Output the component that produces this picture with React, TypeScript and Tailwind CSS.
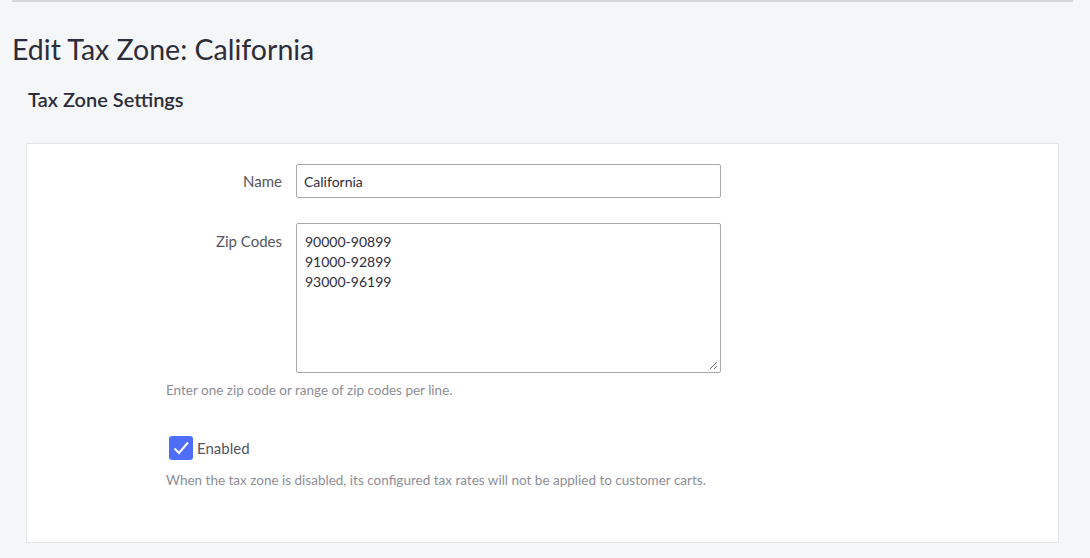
import React from "react";

export default function App() {
  const font = { fontFamily: "Lato, 'Open Sans', sans-serif" };
  return (
    <div className="w-[1090px] h-[558px] bg-[#f5f6f8] overflow-hidden" style={font}>
      <div className="pl-[12px] pr-[17px]">
        <div className="h-[2px] bg-[#d6d7da]" />
        <h1 className="mt-[31px] text-[28.5px] leading-[32px] text-[#2c2d3a] font-normal">
          Edit Tax Zone: California
        </h1>
        <h2 className="mt-[22px] ml-[16px] text-[20px] leading-[24px] font-semibold text-[#2c2d3a]">
          Tax Zone Settings
        </h2>
      </div>
      <div className="ml-[26px] mt-[32px] w-[1033px] h-[400px] bg-white border border-[#e3e4e8] pt-[20px]">
        <div className="flex items-center">
          <label className="w-[255px] text-right text-[15px] text-[#55565f]">Name</label>
          <div className="ml-[14px] w-[425px] h-[34px] border border-[#a9a9ad] rounded-[2px] flex items-center px-[7px] text-[14px] text-[#2c2d3a]">
            California
          </div>
        </div>
        <div className="flex mt-[25px]">
          <label className="w-[255px] text-right text-[15px] text-[#55565f] pt-[7px]">Zip Codes</label>
          <div className="ml-[14px] w-[425px] h-[150px] border border-[#a9a9ad] rounded-[2px] px-[8px] pt-[8px] text-[14px] leading-[20px] text-[#2c2d3a] relative">
            <div>90000-90899</div>
            <div>91000-92899</div>
            <div>93000-96199</div>
            <svg className="absolute right-[2px] bottom-[2px]" width="9" height="9" viewBox="0 0 9 9">
              <path d="M8 1 L1 8 M8 5 L5 8" stroke="#6b6b6b" strokeWidth="1" />
            </svg>
          </div>
        </div>
        <div className="ml-[139px] mt-[7px] text-[13.5px] text-[#8d8e96]">
          Enter one zip code or range of zip codes per line.
        </div>
        <div className="ml-[142px] mt-[36px] flex items-center">
          <div className="w-[24px] h-[24px] rounded-[3px] bg-[#4f6ef7] flex items-center justify-center">
            <svg width="20" height="20" viewBox="0 0 20 20">
              <path d="M3.5 10.5 L8 15 L17 4.5" stroke="white" strokeWidth="2" fill="none" />
            </svg>
          </div>
          <span className="ml-[4px] text-[15px] text-[#55565f]">Enabled</span>
        </div>
        <div className="ml-[139px] mt-[10px] text-[13.5px] text-[#8d8e96]">
          When the tax zone is disabled, its configured tax rates will not be applied to customer carts.
        </div>
      </div>
    </div>
  );
}
